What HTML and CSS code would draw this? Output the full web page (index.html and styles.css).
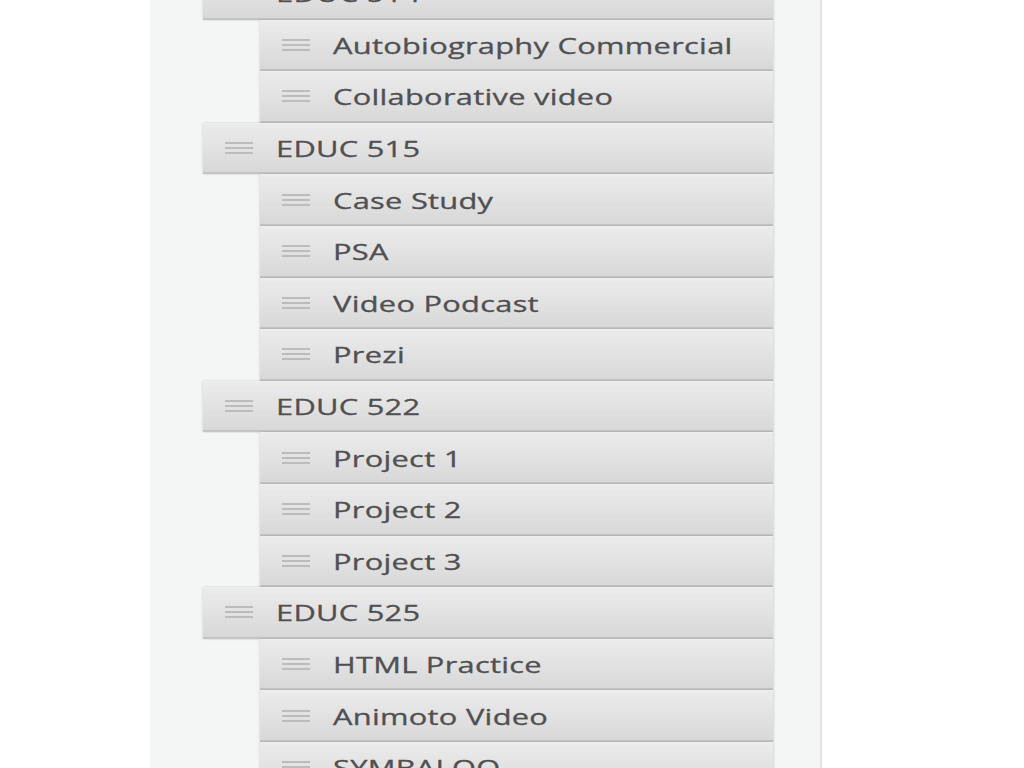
FILE: index.html
```html
<!DOCTYPE html>
<html>
<head>
<meta charset="utf-8">
<link rel="stylesheet" href="styles.css">
</head>
<body>
<div class="panel">
  <ul class="menu">
    <li>
      <div class="row top"><span class="handle"></span><span class="label">EDUC 514</span></div>
      <ul class="sub">
        <li><div class="row"><span class="handle"></span><span class="label">Autobiography Commercial</span></div></li>
        <li><div class="row"><span class="handle"></span><span class="label">Collaborative video</span></div></li>
      </ul>
    </li>
    <li>
      <div class="row top"><span class="handle"></span><span class="label">EDUC 515</span></div>
      <ul class="sub">
        <li><div class="row"><span class="handle"></span><span class="label">Case Study</span></div></li>
        <li><div class="row"><span class="handle"></span><span class="label">PSA</span></div></li>
        <li><div class="row"><span class="handle"></span><span class="label">Video Podcast</span></div></li>
        <li><div class="row"><span class="handle"></span><span class="label">Prezi</span></div></li>
      </ul>
    </li>
    <li>
      <div class="row top"><span class="handle"></span><span class="label">EDUC 522</span></div>
      <ul class="sub">
        <li><div class="row"><span class="handle"></span><span class="label">Project 1</span></div></li>
        <li><div class="row"><span class="handle"></span><span class="label">Project 2</span></div></li>
        <li><div class="row"><span class="handle"></span><span class="label">Project 3</span></div></li>
      </ul>
    </li>
    <li>
      <div class="row top"><span class="handle"></span><span class="label">EDUC 525</span></div>
      <ul class="sub">
        <li><div class="row"><span class="handle"></span><span class="label">HTML Practice</span></div></li>
        <li><div class="row"><span class="handle"></span><span class="label">Animoto Video</span></div></li>
        <li><div class="row"><span class="handle"></span><span class="label">SYMBALOO</span></div></li>
      </ul>
    </li>
  </ul>
</div>
</body>
</html>
```
FILE: styles.css
```css
html, body {
  margin: 0;
  padding: 0;
  background: #ffffff;
  height: 100%;
  overflow: hidden;
}

.panel {
  margin-left: 150px;
  width: 670px;
  height: 768px;
  background: #f4f5f5;
  border-right: 2px solid #e2e4e4;
  overflow: hidden;
}

.menu {
  list-style: none;
  margin: -32px 0 0 0;
  padding: 0 0 0 53px;
}

.sub {
  list-style: none;
  margin: 0;
  padding: 0 0 0 57px;
}

.row {
  box-sizing: border-box;
  height: 51.6px;
  width: 570px;
  display: flex;
  align-items: center;
  padding-left: 22px;
  background: linear-gradient(to bottom, #ebebeb 0%, #e2e2e2 50%, #d8d8d8 100%);
  border-top: 1px solid #f0f0f0;
  border-bottom: 2px solid #c4c4c4;
  box-shadow: -1px 0 2px rgba(0,0,0,0.08), 1px 0 2px rgba(0,0,0,0.12);
  font-family: "Open Sans", "DejaVu Sans", sans-serif;
  font-size: 22px;
  font-weight: 400;
  color: #505052;
  overflow: hidden;
}

.sub .row {
  width: 513px;
}

.handle {
  width: 28px;
  height: 12px;
  flex: none;
  margin-right: 23px;
  background:
    linear-gradient(#bcbcbc, #bcbcbc) 0 0 / 100% 2px no-repeat,
    linear-gradient(#bcbcbc, #bcbcbc) 0 5px / 100% 2px no-repeat,
    linear-gradient(#bcbcbc, #bcbcbc) 0 10px / 100% 2px no-repeat;
}

.label {
  white-space: nowrap;
  display: inline-block;
  transform: scaleX(1.4);
  transform-origin: left center;
  letter-spacing: 0.2px;
  -webkit-text-stroke: 0.3px #505052;
}
```
